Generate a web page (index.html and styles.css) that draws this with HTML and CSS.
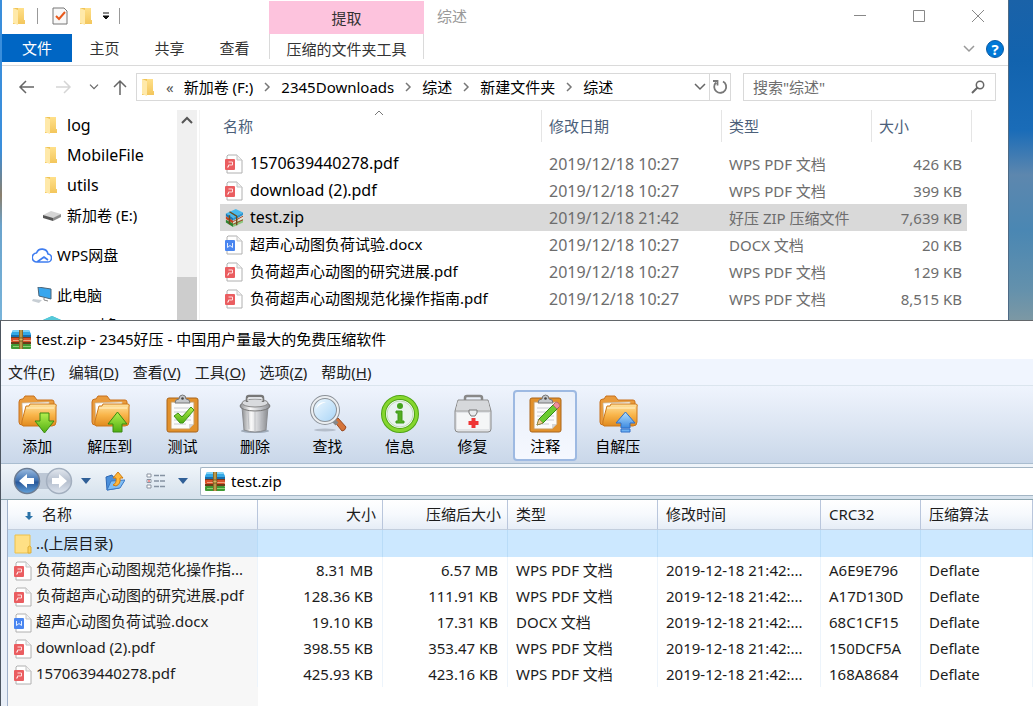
FILE: index.html
```html
<!DOCTYPE html>
<html lang="zh-CN">
<head>
    <meta charset="UTF-8">
    <meta name="viewport" content="width=device-width, initial-scale=1.0">
    <title>test.zip - 2345好压</title>
    <link rel="stylesheet" href="styles.css">
</head>
<body>
    <!-- shared icons -->
    <svg class="sprite" aria-hidden="true">
        <defs>
            <linearGradient id="gFolder" x1="0" y1="0" x2="0" y2="1">
                <stop offset="0" stop-color="#ffe08a"/><stop offset="1" stop-color="#f3c65c"/>
            </linearGradient>
            <linearGradient id="gOrange" x1="0" y1="0" x2="0" y2="1">
                <stop offset="0" stop-color="#ffe3a0"/><stop offset="0.5" stop-color="#f9b54a"/><stop offset="1" stop-color="#e08a1e"/>
            </linearGradient>
            <linearGradient id="gGreen" x1="0" y1="0" x2="0" y2="1">
                <stop offset="0" stop-color="#b5f04f"/><stop offset="1" stop-color="#4fae12"/>
            </linearGradient>
            <linearGradient id="gBlue" x1="0" y1="0" x2="0" y2="1">
                <stop offset="0" stop-color="#b5e0ff"/><stop offset="1" stop-color="#3c8ae0"/>
            </linearGradient>
            <linearGradient id="gSteel" x1="0" y1="0" x2="1" y2="0">
                <stop offset="0" stop-color="#8e9093"/><stop offset="0.35" stop-color="#fafafa"/><stop offset="0.65" stop-color="#c9cbcf"/><stop offset="1" stop-color="#8a8c90"/>
            </linearGradient>
            <linearGradient id="gBack" x1="0" y1="0" x2="0" y2="1">
                <stop offset="0" stop-color="#9cbce0"/><stop offset="0.45" stop-color="#4577b5"/><stop offset="0.55" stop-color="#28589a"/><stop offset="1" stop-color="#63a3dc"/>
            </linearGradient>
            <linearGradient id="gFwd" x1="0" y1="0" x2="0" y2="1">
                <stop offset="0" stop-color="#e3e8ef"/><stop offset="0.5" stop-color="#b5bfce"/><stop offset="1" stop-color="#dde4ee"/>
            </linearGradient>
            <linearGradient id="gLens" x1="0" y1="0" x2="1" y2="1">
                <stop offset="0" stop-color="#f3faff"/><stop offset="1" stop-color="#a5d3f6"/>
            </linearGradient>
        </defs>
        <symbol id="folder" viewBox="0 0 14 18">
            <path d="M1 1h9v16H1z" fill="#f0c456"/>
            <path d="M6 1h6v12h1v4H6z" fill="url(#gFolder)"/>
            <path d="M1 1l5 2v15l-5-2z" fill="#ffe9a9"/>
        </symbol>
        <symbol id="pdf" viewBox="0 0 18 20">
            <path d="M3 1h9l5 5v13H2V2z" fill="#fff" stroke="#b0b0b0" stroke-linejoin="round"/>
            <path d="M12 1v5h5" fill="#f1f1f1" stroke="#c4c4c4"/>
            <rect x="0" y="5" width="10" height="11" rx="1" fill="#ea5d60"/>
            <path d="M3.500 8h4v3h-4M3.500 11v2H2" fill="none" stroke="#ffdede"/>
        </symbol>
        <symbol id="docx" viewBox="0 0 18 20">
            <path d="M3 1h9l5 5v13H2V2z" fill="#fff" stroke="#b0b0b0" stroke-linejoin="round"/>
            <path d="M12 1v5h5" fill="#f1f1f1" stroke="#c4c4c4"/>
            <rect x="0" y="5" width="10" height="11" rx="1" fill="#4a86f0"/>
            <path d="M2.500 8v4.500L5 10.500l2.500 2V8" fill="none" stroke="#e3edff"/>
        </symbol>
        <symbol id="books" viewBox="0 0 20 20">
            <path d="M2 1h16l2 4v2H0V5z" fill="#35a9e6"/>
            <path d="M2 1h16l1 2H1z" fill="#7fd2f7"/>
            <rect y="6" width="20" height="2" fill="#176fae"/>
            <rect y="8" width="20" height="2" fill="#7b3a1c"/>
            <rect y="9" width="20" height="4" rx="1" fill="#d9512a"/>
            <rect x="2" y="11" width="18" height="1" fill="#eda77f"/>
            <rect y="13" width="20" height="2" fill="#6b3a17"/>
            <rect y="15" width="20" height="5" rx="1" fill="#3f9a35"/>
            <rect x="2" y="17" width="18" height="1" fill="#8fce72"/>
            <path d="M8 1h4v19H8z" fill="#8a6a2a"/>
            <path d="M9.500 1h1v19h-1z" fill="#e8c66a"/>
            <rect x="8" y="9" width="4" height="3" rx="1" fill="#d9b25a" stroke="#5d4314" stroke-width=".7"/>
        </symbol>
        <symbol id="books-tilt" viewBox="0 0 20 20">
            <path d="M1 5l11-5 8 4-11 6z" fill="#49b9ec"/>
            <path d="M1 5l8 5v3L1 8z" fill="#1b78b4"/><path d="M9 10l11-6v3L9 13z" fill="#2b94d0"/>
            <path d="M1 8l8 5v3L1 11z" fill="#c4441f"/><path d="M9 13l11-6v4L9 16z" fill="#e8e0d2"/>
            <path d="M1 12l8 4v4l-8-5z" fill="#2f8430"/><path d="M9 16l11-5v4L9 20z" fill="#8cc980"/>
            <path d="M9 14l11-6M9 17l11-5" stroke="#a33c1c"/>
            <path d="M5 3l8 5v10M5 7v10" fill="none" stroke="#6b4b1c" stroke-width="1.500"/>
        </symbol>
        <symbol id="box-folder" viewBox="0 0 40 40">
            <path d="M2 8q0-3 3-3h1l2-3h9l3 4h15q2 0 2 2v20q0 3-3 3H5q-3 0-3-3z" fill="#e99b3c" stroke="#c8711c"/>
            <path d="M5 9l27-1 2 20H6z" fill="#fff" stroke="#c6b79f" stroke-width=".7"/>
            <path d="M5 27l4-15h3l1-2h25q2 0 1 3v15q0 4-4 4H6q-2-1-1-5z" fill="url(#gOrange)" stroke="#cd781a"/>
            <path d="M9 14h28" stroke="#fff1c9"/>
        </symbol>
        <symbol id="clipboard" viewBox="0 0 40 40">
            <rect x="5" y="4" width="31" height="34" rx="2" fill="#e2912b" stroke="#aa641a"/>
            <path d="M9 8h23v22l-5 5H9z" fill="#fbfbfb" stroke="#c99b5f"/>
            <path d="M27 35v-5h5z" fill="#d5d5d5"/>
            <path d="M12 14h17M12 18h17M12 22h17M12 26h17M12 30h12" stroke="#c9ccd0"/>
            <path d="M13 9q0-4 4-4 0-4 3.500-4T24 5q4 0 4 4z" fill="#c4c7cb" stroke="#777"/>
            <circle cx="20.500" cy="4.500" r="1.300" fill="#444"/>
        </symbol>
        <symbol id="chev-r" viewBox="0 0 8 10">
            <path d="M2 1l4 4-4 4" fill="none" stroke="#777" stroke-width="1.500"/>
        </symbol>
        <symbol id="chev-d" viewBox="0 0 14 10">
            <path d="M2 2l5 5 5-5" fill="none" stroke="currentColor" stroke-width="1.500"/>
        </symbol>
    </svg>

    <main class="desktop">
        <!-- file explorer -->
        <section class="explorer">
            <header class="ribbon">
                <div class="ribbon-left">
                    <div class="quick">
                        <svg class="i-folder"><use href="#folder"/></svg>
                        <span class="sep sep-first"></span>
                        <button class="plain" aria-label="属性">
                            <svg class="i-check" viewBox="0 0 16 18">
                                <path d="M1 1h11l3 3v13H1z" fill="#f8f8f8" stroke="#777"/>
                                <path d="M4 9l3 3 6-7" fill="none" stroke="#e8591c" stroke-width="2"/>
                            </svg>
                        </button>
                        <button class="plain" aria-label="新建文件夹"><svg class="i-folder"><use href="#folder"/></svg></button>
                        <button class="plain more" aria-label="自定义快速访问工具栏">
                            <svg class="i-more" viewBox="0 0 8 8"><path d="M1 1h6M1 4h6l-3 3z" fill="#111" stroke="#111"/></svg>
                        </button>
                        <span class="sep"></span>
                    </div>
                    <nav class="tabs">
                        <button class="tab tab-file">文件</button>
                        <button class="tab">主页</button>
                        <button class="tab">共享</button>
                        <button class="tab">查看</button>
                    </nav>
                </div>
                <div class="context">
                    <div class="context-title">提取</div>
                    <button class="context-tab">压缩的文件夹工具</button>
                </div>
                <div class="ribbon-right">
                    <div class="caption">
                        <span class="caption-text">综述</span>
                        <button class="plain" aria-label="最小化"><svg class="i-win" viewBox="0 0 14 14"><path d="M1 6.500h12" stroke="#888"/></svg></button>
                        <button class="plain" aria-label="最大化"><svg class="i-win" viewBox="0 0 14 14"><path d="M1.500 1.500h11v11h-11z" fill="none" stroke="#888"/></svg></button>
                        <button class="plain" aria-label="关闭"><svg class="i-win" viewBox="0 0 14 14"><path d="M1 1l12 12M13 1L1 13" stroke="#888"/></svg></button>
                    </div>
                    <div class="help-row">
                        <button class="plain muted" aria-label="展开功能区"><svg class="i-chev"><use href="#chev-d"/></svg></button>
                        <button class="help">?</button>
                    </div>
                </div>
            </header>

            <div class="navbar">
                <div class="nav-buttons">
                    <button class="plain" aria-label="返回"><svg class="i-arrow" viewBox="0 0 16 16"><path d="M16 8H2M8 2L2 8l6 6" fill="none" stroke="#666" stroke-width="1.500"/></svg></button>
                    <button class="plain" aria-label="前进"><svg class="i-arrow" viewBox="0 0 16 16"><path d="M0 8h14M8 2l6 6-6 6" fill="none" stroke="#d5d5d5" stroke-width="1.500"/></svg></button>
                    <button class="plain gray" aria-label="最近位置"><svg class="i-chev-s"><use href="#chev-d"/></svg></button>
                    <button class="plain" aria-label="上移"><svg class="i-arrow" viewBox="0 0 16 16"><path d="M8 16V2M2 8l6-6 6 6" fill="none" stroke="#666" stroke-width="1.500"/></svg></button>
                </div>
                <div class="address">
                    <svg class="i-folder"><use href="#folder"/></svg>
                    <span class="laquo">«</span>
                    <a class="crumb" href="#">新加卷 (F:)</a>
                    <svg class="i-crumb"><use href="#chev-r"/></svg>
                    <a class="crumb" href="#">2345Downloads</a>
                    <svg class="i-crumb"><use href="#chev-r"/></svg>
                    <a class="crumb" href="#">综述</a>
                    <svg class="i-crumb"><use href="#chev-r"/></svg>
                    <a class="crumb" href="#">新建文件夹</a>
                    <svg class="i-crumb"><use href="#chev-r"/></svg>
                    <a class="crumb" href="#">综述</a>
                    <button class="plain gray history" aria-label="历史记录"><svg class="i-chev"><use href="#chev-d"/></svg></button>
                    <button class="plain refresh" aria-label="刷新">
                        <svg class="i-refresh" viewBox="0 0 16 16"><path d="M11 2.500A6 6 0 1 1 4 3.500M1 2h4.500v4.500" fill="none" stroke="#777" stroke-width="1.800"/></svg>
                    </button>
                </div>
                <label class="search">
                    <input class="search-input" type="text" placeholder='搜索"综述"' aria-label="搜索">
                    <svg class="i-search" viewBox="0 0 14 14"><circle cx="9" cy="5" r="3.700" fill="none" stroke="#666" stroke-width="1.500"/><path d="M6.500 7.500L1 13" stroke="#666" stroke-width="2"/></svg>
                </label>
            </div>

            <div class="explorer-body">
                <nav class="tree">
                    <a class="node latin" href="#"><svg class="i-folder"><use href="#folder"/></svg>log</a>
                    <a class="node latin" href="#"><svg class="i-folder"><use href="#folder"/></svg>MobileFile</a>
                    <a class="node latin" href="#"><svg class="i-folder"><use href="#folder"/></svg>utils</a>
                    <a class="node node-drive" href="#">
                        <svg class="i-drive" viewBox="0 0 18 12"><path d="M0 6l8-4 10 3-8 5z" fill="#d5d5d5"/><path d="M0 6l10 3v3L0 9z" fill="#555"/><path d="M10 9l8-4v3l-8 4z" fill="#8c8c8c"/></svg>新加卷 (E:)</a>
                    <a class="node node-top" href="#">
                        <svg class="i-top" viewBox="0 0 20 16"><path d="M5 15h10a4 4 0 0 0 1-8A6 6 0 0 0 4.500 6 4.500 4.500 0 0 0 5 15l7-5 4 3" fill="none" stroke="#3f7df0" stroke-width="1.600" stroke-linejoin="round"/></svg>WPS网盘</a>
                    <a class="node node-top" href="#">
                        <svg class="i-top" viewBox="0 0 20 16"><path d="M6 0l13 2v10L7 9z" fill="#38a6ee" stroke="#4b6478"/><path d="M12 11v2l4 1" fill="none" stroke="#888"/><path d="M1 12l9 1-3 3-7-2z" fill="#c7ced4"/></svg>此电脑</a>
                    <a class="node node-3d" href="#">
                        <svg class="i-cube" viewBox="0 0 18 18"><path d="M0 4l9-4 9 4v9l-9 4-9-4z" fill="#35b3c9"/><path d="M0 4l9-4 9 4-9 4z" fill="#56c9d9"/></svg>3D 对象</a>
                </nav>
                <div class="scrollbar">
                    <svg class="i-scroll" viewBox="0 0 12 8"><path d="M1 7l5-5 5 5" fill="none" stroke="#555" stroke-width="2"/></svg>
                    <div class="thumb"></div>
                </div>
                <div class="files">
                    <table class="file-table">
                        <colgroup><col class="f-name"><col class="f-date"><col class="f-type"><col class="f-size"></colgroup>
                        <thead>
                            <tr>
                                <th class="sorted">名称<svg class="i-sort" viewBox="0 0 10 6"><path d="M1 5l4-4 4 4" fill="none" stroke="#777"/></svg></th>
                                <th>修改日期</th><th>类型</th><th>大小</th>
                            </tr>
                        </thead>
                        <tbody>
                            <tr class="spacer"><td colspan="4"></td></tr>
                            <tr><td class="latin"><svg class="i-file"><use href="#pdf"/></svg>1570639440278.pdf</td><td class="latin">2019/12/18 10:27</td><td>WPS PDF 文档</td><td>426 KB</td></tr>
                            <tr><td class="latin"><svg class="i-file"><use href="#pdf"/></svg>download (2).pdf</td><td class="latin">2019/12/18 10:27</td><td>WPS PDF 文档</td><td>399 KB</td></tr>
                            <tr class="selected"><td class="latin"><svg class="i-file"><use href="#books-tilt"/></svg>test.zip</td><td class="latin">2019/12/18 21:42</td><td>好压 ZIP 压缩文件</td><td>7,639 KB</td></tr>
                            <tr><td><svg class="i-file"><use href="#docx"/></svg>超声心动图负荷试验.docx</td><td class="latin">2019/12/18 10:27</td><td>DOCX 文档</td><td>20 KB</td></tr>
                            <tr><td><svg class="i-file"><use href="#pdf"/></svg>负荷超声心动图的研究进展.pdf</td><td class="latin">2019/12/18 10:27</td><td>WPS PDF 文档</td><td>129 KB</td></tr>
                            <tr><td><svg class="i-file"><use href="#pdf"/></svg>负荷超声心动图规范化操作指南.pdf</td><td class="latin">2019/12/18 10:27</td><td>WPS PDF 文档</td><td>8,515 KB</td></tr>
                        </tbody>
                    </table>
                </div>
            </div>
        </section>

        <!-- archive manager -->
        <section class="archive">
            <header class="titlebar"><svg class="i-books"><use href="#books"/></svg>test.zip - 2345好压 - 中国用户量最大的免费压缩软件</header>
            <nav class="menubar">
                <button class="menu">文件(<u>F</u>)</button>
                <button class="menu">编辑(<u>D</u>)</button>
                <button class="menu">查看(<u>V</u>)</button>
                <button class="menu">工具(<u>O</u>)</button>
                <button class="menu">选项(<u>Z</u>)</button>
                <button class="menu">帮助(<u>H</u>)</button>
            </nav>
            <div class="toolbar">
                <div class="tools">
                    <button class="tool"><svg class="i-tool" viewBox="0 0 40 40"><use href="#box-folder"/><path d="M23 19h9v8h5l-9.500 12L18 27h5z" fill="url(#gGreen)" stroke="#3b8a12"/></svg>添加</button>
                    <button class="tool"><svg class="i-tool" viewBox="0 0 40 40"><use href="#box-folder"/><path d="M23 38h9v-8h5l-9.500-12L18 30h5z" fill="url(#gGreen)" stroke="#3b8a12"/></svg>解压到</button>
                    <button class="tool"><svg class="i-tool" viewBox="0 0 40 40"><use href="#clipboard"/><path d="M12 22l4-3 4 4 9-10 3 3-11 13h-3z" fill="url(#gGreen)" stroke="#3e9414"/></svg>测试</button>
                    <button class="tool"><svg class="i-tool" viewBox="0 0 40 40">
                        <ellipse cx="20" cy="37" rx="14" ry="2" fill="#9faab8"/>
                        <path d="M7 13h26l-2 23q-11 4-22 0z" fill="url(#gSteel)" stroke="#8b8d91"/>
                        <path d="M13 17l1 18M20 18v19M27 17l-1 18" stroke="#b5b8bc" stroke-width=".8"/>
                        <ellipse cx="20" cy="12" rx="15" ry="5" fill="url(#gSteel)" stroke="#777"/>
                        <ellipse cx="20" cy="9" rx="13" ry="4" fill="#d9dbde" stroke="#888"/>
                        <path d="M12 8V4q0-2 2-2h12q2 0 2 2v4" fill="none" stroke="#777" stroke-width="2.500"/>
                        <path d="M13 7V4h14v3" fill="none" stroke="#eee"/></svg>删除</button>
                    <button class="tool"><svg class="i-tool" viewBox="0 0 40 40">
                        <ellipse cx="18" cy="36" rx="11" ry="1.500" fill="#b4bdca"/>
                        <path d="M27 27l4-3 8 9q-1 4-4 4z" fill="#d5743a" stroke="#9a4a20"/>
                        <path d="M26 26l4 4" stroke="#888" stroke-width="4"/>
                        <circle cx="18" cy="16" r="13" fill="url(#gLens)" stroke="#8b9198" stroke-width="4"/>
                        <circle cx="18" cy="16" r="13" fill="none" stroke="#eceff2" stroke-width="2"/>
                        <path d="M9 15q2-8 10-7-7 2-10 7z" fill="#fff"/></svg>查找</button>
                    <button class="tool"><svg class="i-tool" viewBox="0 0 40 40">
                        <circle cx="20" cy="20" r="16.500" fill="#fafcf8" stroke="#4fa416" stroke-width="5"/>
                        <circle cx="20" cy="20" r="16.500" fill="none" stroke="#86d62e" stroke-width="3"/>
                        <circle cx="20" cy="20" r="13" fill="#e8f2ee" stroke="#c1d9bb"/>
                        <circle cx="20" cy="12" r="3" fill="#43a31b"/>
                        <path d="M16 17h6v10h2v2h-8v-2h2v-8h-2z" fill="#54ae20" stroke="#3f9a16"/></svg>信息</button>
                    <button class="tool"><svg class="i-tool" viewBox="0 0 40 40">
                        <path d="M12 8V4q0-2 2-2h13q2 0 2 2v4" fill="none" stroke="#888" stroke-width="2.500"/>
                        <path d="M5 6h30l3 11v18q0 3-3 3H5q-3 0-3-3V17z" fill="#e1e3e6" stroke="#888"/>
                        <path d="M2 17h36" stroke="#999"/><path d="M4 19h32v16H4z" fill="#f5f6f7"/>
                        <path d="M5 7h30l2 9H3z" fill="#d6d8db"/>
                        <path d="M16 16h8v3l-2 3h-4l-2-3z" fill="#e9ebed" stroke="#777"/>
                        <path d="M18.500 24h4v3h3v4h-3v3h-4v-3h-3v-4h3z" fill="#ef3434"/></svg>修复</button>
                    <button class="tool tool-active"><svg class="i-tool" viewBox="0 0 40 40"><use href="#clipboard"/><path d="M12 31l2-6L30 9l4 4-16 16z" fill="#6bcc31" stroke="#348818"/><path d="M12 31l2-6 4 4z" fill="#f2cf9a" stroke="#9a6d3a" stroke-width=".6"/><path d="M28 11l3-3q3 0 4 4l-3 3z" fill="#ee8f9b" stroke="#a34f5d" stroke-width=".6"/></svg>注释</button>
                    <button class="tool"><svg class="i-tool" viewBox="0 0 40 40"><use href="#box-folder"/><path d="M23 34h9v-5h5l-9.500-11L18 29h5z" fill="url(#gBlue)" stroke="#2f6fc9"/><path d="M23 35h9v3h-9z" fill="#6fb2f2" stroke="#2f6fc9"/></svg>自解压</button>
                </div>
            </div>
            <div class="pathbar">
                <svg class="i-nav" viewBox="0 0 60 28">
                    <path d="M24 6h12v16H24z" fill="#bcc7d5"/>
                    <circle cx="14" cy="14" r="12.500" fill="url(#gBack)" stroke="#6b7c93" stroke-width="1.500"/>
                    <path d="M6 14l8-7v4h7v6h-7v4z" fill="#fff"/>
                    <circle cx="46" cy="14" r="12.500" fill="url(#gFwd)" stroke="#a3afbf" stroke-width="1.500"/>
                    <path d="M54 14l-8-7v4h-7v6h7v4z" fill="#fff"/>
                </svg>
                <svg class="i-tri" viewBox="0 0 10 6"><path d="M0 0h10L5 6z" fill="#2f5f97"/></svg>
                <button class="plain" aria-label="上一级">
                    <svg class="i-up" viewBox="0 0 20 20">
                        <path d="M1 6l6-2 1 2 6-1v12l-12 2z" fill="#4a8fdb" stroke="#2d67b3"/>
                        <path d="M2 19l4-9 14-1-5 8z" fill="#7dbdf5" stroke="#3a78c4"/>
                        <path d="M8 14q4-2 3-7H8l5-6 5 6h-3q1 6-4 8z" fill="#ffb83d" stroke="#cf7c12"/>
                    </svg>
                </button>
                <svg class="i-view" viewBox="0 0 20 16">
                    <g fill="#fff" stroke="#8a93a0"><path d="M1 1h4v3H1zM1 6.500h4v3H1zM1 12h4v3H1z"/></g>
                    <path d="M2.500 8h1" stroke="#d33" stroke-width="2"/>
                    <path d="M8 2.500h11M8 8h11M8 13.500h11" stroke="#8592a2" stroke-width="1.500" stroke-dasharray="5 1"/>
                </svg>
                <svg class="i-tri" viewBox="0 0 10 6"><path d="M0 0h10L5 6z" fill="#2f5f97"/></svg>
                <label class="path">
                    <svg class="i-books"><use href="#books"/></svg>
                    <input class="path-input" type="text" value="test.zip" aria-label="路径">
                </label>
            </div>
            <div class="entries">
                <table class="entry-table">
                    <colgroup><col class="e-name"><col class="e-size"><col class="e-size"><col class="e-type"><col class="e-time"><col class="e-crc"><col></colgroup>
                    <thead>
                        <tr>
                            <th><svg class="i-down" viewBox="0 0 10 10"><path d="M3.500 1h3v4H9l-4 4-4-4h2.500z" fill="#2b73a8"/></svg>名称</th>
                            <th class="num">大小</th><th class="num">压缩后大小</th><th>类型</th><th>修改时间</th><th>CRC32</th><th>压缩算法</th>
                        </tr>
                    </thead>
                    <tbody>
                        <tr class="parent"><td><svg class="i-entry" viewBox="0 0 18 20"><path d="M1 1h15v18H1z" fill="#ffe085" stroke="#edc04b"/><path d="M14 19v-6q2-2 3 0v6z" fill="#ffd25a" stroke="#dcae3c"/></svg>..(上层目录)</td><td></td><td></td><td></td><td></td><td></td><td></td></tr>
                        <tr><td><svg class="i-entry"><use href="#pdf"/></svg>负荷超声心动图规范化操作指...</td><td class="num">8.31 MB</td><td class="num">6.57 MB</td><td>WPS PDF 文档</td><td>2019-12-18 21:42:...</td><td>A6E9E796</td><td>Deflate</td></tr>
                        <tr><td><svg class="i-entry"><use href="#pdf"/></svg>负荷超声心动图的研究进展.pdf</td><td class="num">128.36 KB</td><td class="num">111.91 KB</td><td>WPS PDF 文档</td><td>2019-12-18 21:42:...</td><td>A17D130D</td><td>Deflate</td></tr>
                        <tr><td><svg class="i-entry"><use href="#docx"/></svg>超声心动图负荷试验.docx</td><td class="num">19.10 KB</td><td class="num">17.31 KB</td><td>DOCX 文档</td><td>2019-12-18 21:42:...</td><td>68C1CF15</td><td>Deflate</td></tr>
                        <tr><td><svg class="i-entry"><use href="#pdf"/></svg>download (2).pdf</td><td class="num">398.55 KB</td><td class="num">353.47 KB</td><td>WPS PDF 文档</td><td>2019-12-18 21:42:...</td><td>150DCF5A</td><td>Deflate</td></tr>
                        <tr><td><svg class="i-entry"><use href="#pdf"/></svg>1570639440278.pdf</td><td class="num">425.93 KB</td><td class="num">423.16 KB</td><td>WPS PDF 文档</td><td>2019-12-18 21:42:...</td><td>168A8684</td><td>Deflate</td></tr>
                    </tbody>
                </table>
            </div>
        </section>
    </main>
</body>
</html>
```

FILE: styles.css
```css
* {
    box-sizing: border-box;
}

body {
    margin: 0;
    font-family: "Noto Sans", "Noto Sans CJK SC", sans-serif;
    font-size: 15px;
    line-height: 20px;
    color: #000;
}

button, input {
    font: inherit;
    color: inherit;
    border: none;
    padding: 0;
    margin: 0;
    background: none;
    outline: none;
}

a {
    color: inherit;
    text-decoration: none;
}

svg {
    display: block;
    flex: none;
}

table {
    border-collapse: separate;
    border-spacing: 0;
    table-layout: fixed;
}

.sprite {
    position: absolute;
    width: 0;
    height: 0;
}

.desktop {
    position: relative;
    height: 100vh;
    overflow: hidden;
    background: linear-gradient(#1a62a8 0, #1263ae 60px, #1a6cb8 130px, #5d87ae 175px, #4a87b3 230px, #6491ac 290px, #7c98a4 320px);
}

.plain {
    display: flex;
    align-items: center;
    justify-content: center;
}

.gray {
    color: #666;
}

.muted {
    color: #999;
}

.latin {
    font-size: 16px;
}

/* icon sizes */
.i-folder { width: 14px; height: 18px; }
.i-check { width: 16px; height: 18px; }
.i-more { width: 8px; height: 8px; }
.i-win { width: 14px; height: 14px; }
.i-arrow { width: 16px; height: 16px; }
.i-chev { width: 14px; height: 10px; }
.i-chev-s { width: 12px; height: 8px; }
.i-crumb { width: 8px; height: 10px; margin: 0 10px; }
.i-refresh { width: 16px; height: 16px; }
.i-search { width: 14px; height: 14px; }
.i-drive { width: 18px; height: 14px; }
.i-cube { width: 18px; height: 18px; }
.i-top { width: 20px; height: 16px; }
.i-scroll { width: 12px; height: 8px; }
.i-books { width: 20px; height: 20px; }
.i-tool { width: 40px; height: 40px; }
.i-nav { width: 60px; height: 28px; }
.i-tri { width: 10px; height: 6px; }
.i-up { width: 20px; height: 20px; }
.i-view { width: 20px; height: 16px; }

/* ---------- explorer ---------- */
.explorer {
    position: absolute;
    top: 0;
    left: 0;
    right: 25px;
    height: 321px;
    overflow: hidden;
    display: flex;
    flex-direction: column;
    background: #fff;
    border-left: 2px solid;
    border-image: linear-gradient(#3a8edb 150px, #8b7f6c 195px, #6aa3cc 225px, #78b4da) 1;
    box-shadow: 1px 0 #4d6a85;
}

.ribbon {
    display: flex;
    height: 66px;
    border-bottom: 1px solid #dadada;
}

.ribbon-left {
    width: 267px;
}

.quick {
    display: flex;
    align-items: center;
    height: 34px;
    padding: 0 0 2px 10px;
    gap: 11px;
}

.sep {
    width: 1px;
    height: 16px;
    background: #999;
}

.sep-first {
    margin-right: 3px;
}

.quick .more {
    margin: 0 -2px;
}

.tabs {
    display: flex;
    height: 28px;
}

.tab {
    width: 65px;
    color: #333;
}

.tab-file {
    width: 70px;
    background: #0066c4;
    color: #fff;
}

.context {
    display: flex;
    flex-direction: column;
    width: 155px;
}

.context-title {
    height: 33px;
    margin-top: 1px;
    line-height: 34px;
    text-align: center;
    color: #333;
    background: #fdc3dd;
}

.context-tab {
    height: 25px;
    line-height: 30px;
    color: #333;
    border-left: 1px solid #dadada;
    border-right: 1px solid #dadada;
}

.ribbon-right {
    flex: 1;
}

.caption {
    display: flex;
    align-items: center;
    height: 31px;
    padding: 0 23px 0 13px;
    gap: 45px;
}

.caption-text {
    flex: 1;
    color: #999;
}

.help-row {
    display: flex;
    align-items: center;
    justify-content: flex-end;
    height: 36px;
    padding-right: 4px;
    gap: 10px;
}

.help {
    width: 18px;
    height: 18px;
    border-radius: 50%;
    background: #0078d7;
    border: 1px solid #0a5ba5;
    color: #fff;
    font-weight: bold;
    line-height: 16px;
}

.navbar {
    display: flex;
    align-items: center;
    height: 43px;
    padding: 0 12px 2px 16px;
}

.nav-buttons {
    display: flex;
    width: 118px;
    gap: 22px;
}

.nav-buttons .gray {
    margin: 0 -10px 0 -6px;
}

.address {
    display: flex;
    align-items: center;
    flex: 1;
    height: 28px;
    margin-right: 12px;
    padding-left: 4px;
    border: 1px solid #d9d9d9;
}

.laquo {
    margin: 0 10px 0 11px;
    color: #555;
}

.crumb {
    white-space: nowrap;
}

.history {
    margin-left: auto;
    width: 18px;
    height: 26px;
}

.refresh {
    width: 21px;
    height: 26px;
    border-left: 1px solid #d9d9d9;
}

.search {
    display: flex;
    align-items: center;
    width: 253px;
    height: 28px;
    padding: 0 10px 0 9px;
    border: 1px solid #d9d9d9;
}

.search-input {
    flex: 1;
    min-width: 0;
}

.search-input::placeholder {
    color: #6d6d6d;
}

.explorer-body {
    display: flex;
    flex: 1;
    min-height: 0;
    padding-top: 1px;
}

.tree {
    width: 175px;
    overflow: hidden;
}

.node {
    display: flex;
    align-items: center;
    height: 30px;
    padding-left: 42px;
    gap: 9px;
}

.node-drive, .node-3d {
    padding-left: 41px;
    gap: 6px;
}

.node-top {
    margin: 10px 0;
    padding-left: 30px;
    gap: 5px;
}

.node-top + .node-top {
    margin-bottom: 0;
}

.scrollbar {
    display: flex;
    flex-direction: column;
    align-items: center;
    justify-content: space-between;
    width: 20px;
    padding-top: 6px;
    background: #f0f0f0;
}

.thumb {
    width: 20px;
    height: 44px;
    background: #cdcdcd;
}

.files {
    flex: 1;
    padding-left: 20px;
    margin-left: 2px;
    border-left: 1px solid #f3f3f3;
}

.file-table {
    width: 752px;
    color: #6d6d6d;
}

.f-name { width: 322px; }
.f-date { width: 180px; }
.f-type { width: 150px; }
.f-size { width: 100px; }

.file-table th {
    height: 32px;
    padding: 0 7px;
    font-weight: normal;
    text-align: left;
    color: #4c607a;
    border-right: 1px solid #e5e5e5;
}

.file-table th:first-child {
    padding-left: 3px;
}

.sorted {
    position: relative;
}

.i-sort {
    position: absolute;
    top: 0;
    left: 48%;
    width: 10px;
    height: 6px;
}

.file-table td {
    height: 27px;
    padding: 0 7px;
    white-space: nowrap;
}

.file-table .spacer td {
    height: 8px;
}

.file-table td:first-child {
    padding-left: 5px;
    color: #000;
}

.file-table td:last-child {
    text-align: right;
    padding-right: 5px;
    border-right: 5px solid #fff;
}

.selected {
    background: #d9d9d9;
}

.i-file, .i-entry {
    display: inline-block;
    width: 18px;
    height: 20px;
    margin-right: 7px;
    vertical-align: middle;
}

/* ---------- archive window ---------- */
.archive {
    position: absolute;
    top: 320px;
    left: 0;
    right: 0;
    bottom: 0;
    display: flex;
    flex-direction: column;
    background: #e9eff8;
    border-top: 1px solid #63676b;
    border-left: 1px solid #4c5560;
}

.titlebar {
    display: flex;
    align-items: center;
    height: 38px;
    padding: 0 0 2px 10px;
    gap: 5px;
    background: #fff;
}

.menubar {
    display: flex;
    align-items: center;
    height: 27px;
    padding: 0 0 1px 7px;
    gap: 14px;
    background: #f0f5fe;
    border-bottom: 1px solid #dbe5ee;
    color: #222;
}

.toolbar {
    height: 78px;
    padding-top: 4px;
    background: linear-gradient(#eff4fd, #dde6f3 50%, #c9d7e9);
    border-bottom: 1px solid #a9bdd0;
}

/* nine equal buttons */
.tools {
    display: grid;
    grid-template-columns: repeat(9, 1fr);
    width: 653px;
}

.tool {
    display: flex;
    flex-direction: column;
    align-items: center;
    height: 71px;
    margin: 0 4px;
    padding-top: 3px;
    gap: 2px;
    border: 1px solid transparent;
    border-radius: 4px;
}

.tool-active {
    background: linear-gradient(#eaf0fa, #f5f8ff);
    border: 2px solid #9db9e2;
    padding-top: 2px;
}

.pathbar {
    display: flex;
    align-items: center;
    height: 36px;
    padding: 0 0 1px 12px;
    background: linear-gradient(#f0f5fa, #d5e1ec);
    border-bottom: 1px solid #8ba4ae;
}

.pathbar .i-tri {
    margin: 0 12px 0 8px;
}

.pathbar .plain {
    margin-left: 2px;
    margin-right: 20px;
}

.pathbar .i-view {
    margin-left: 1px;
    margin-right: 4px;
}

.path {
    display: flex;
    align-items: center;
    flex: 1;
    height: 29px;
    padding-left: 4px;
    gap: 6px;
    background: #fff;
    border: 1px solid #a3b5c4;
    border-right: none;
    border-radius: 2px 0 0 2px;
}

.path-input {
    flex: 1;
}

.entries {
    flex: 1;
    margin-left: 6px;
    border-left: 1px solid #9fb0c9;
    background: linear-gradient(#f7f7f7, #f7f7f7) no-repeat 0 0 / 250px 100% #fff;
}

.entry-table {
    width: 100%;
    color: #1c1c1c;
}

.e-name { width: 250px; }
.e-size { width: 125px; }
.e-type { width: 150px; }
.e-time { width: 163px; }
.e-crc { width: 100px; }

.entry-table th {
    height: 30px;
    padding: 0 6px 1px 8px;
    font-weight: normal;
    text-align: left;
    background: linear-gradient(#fff, #f6f9fd 50%, #e6edf6);
    border-right: 1px solid #b9c6dc;
    border-bottom: 1px solid #c3cedd;
}

.i-down {
    display: inline-block;
    width: 10px;
    height: 10px;
    margin: 0 8px;
    vertical-align: middle;
}

.entry-table td {
    height: 26px;
    padding: 0 6px 0 8px;
    white-space: nowrap;
    border-right: 1px solid #edf4fb;
}

.entry-table td:first-child {
    padding-left: 6px;
}

.entry-table .i-entry {
    margin-right: 4px;
}

.entry-table .num {
    text-align: right;
}

.entry-table td.num {
    padding-right: 9px;
}

.parent {
    background: #cce8ff;
}

.entry-table .parent td {
    height: 27px;
    border-right-color: #b9dcf8;
}

.entry-table .parent td:first-child {
    background: #c5e0f8;
}
```
